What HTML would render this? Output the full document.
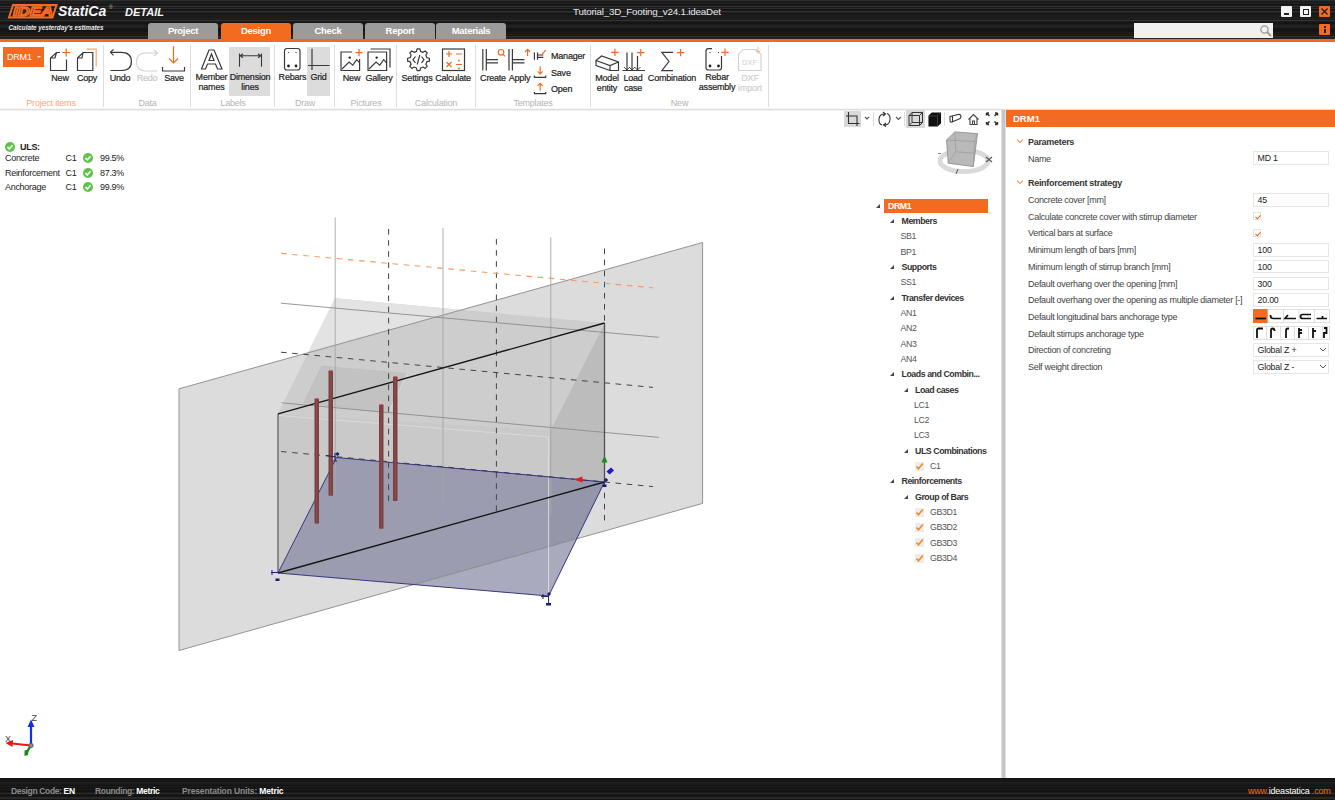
<!DOCTYPE html>
<html><head><meta charset="utf-8">
<style>
*{margin:0;padding:0;box-sizing:border-box}
html,body{width:1335px;height:800px;overflow:hidden;background:#fff;font-family:"Liberation Sans",sans-serif;position:relative}
.a{position:absolute}
#title{left:0;top:0;width:1335px;height:39px;background:linear-gradient(180deg,rgb(44,44,44) 0px,rgb(44,44,44) 1px,rgb(30,30,30) 1px,rgb(30,30,30) 2px,rgb(28,28,28) 2px,rgb(28,28,28) 3px,rgb(32,32,32) 3px,rgb(32,32,32) 4px,rgb(22,22,22) 4px,rgb(22,22,22) 5px,rgb(26,26,26) 5px,rgb(26,26,26) 6px,rgb(50,50,50) 6px,rgb(50,50,50) 7px,rgb(26,26,26) 7px,rgb(26,26,26) 8px,rgb(44,44,44) 8px,rgb(44,44,44) 9px,rgb(20,20,20) 9px,rgb(20,20,20) 10px,rgb(22,22,22) 10px,rgb(22,22,22) 11px,rgb(50,50,50) 11px,rgb(50,50,50) 12px,rgb(34,34,34) 12px,rgb(34,34,34) 13px,rgb(22,22,22) 13px,rgb(22,22,22) 14px,rgb(26,26,26) 14px,rgb(26,26,26) 15px,rgb(28,28,28) 15px,rgb(28,28,28) 16px,rgb(28,28,28) 16px,rgb(28,28,28) 17px,rgb(26,26,26) 17px,rgb(26,26,26) 18px,rgb(34,34,34) 18px,rgb(34,34,34) 19px,rgb(26,26,26) 19px,rgb(26,26,26) 20px,rgb(50,50,50) 20px,rgb(50,50,50) 21px,rgb(28,28,28) 21px,rgb(28,28,28) 22px,rgb(22,22,22) 22px,rgb(22,22,22) 23px,rgb(20,20,20) 23px,rgb(20,20,20) 24px,rgb(26,26,26) 24px,rgb(26,26,26) 25px,rgb(34,34,34) 25px,rgb(34,34,34) 26px,rgb(32,32,32) 26px,rgb(32,32,32) 27px,rgb(32,32,32) 27px,rgb(32,32,32) 28px,rgb(20,20,20) 28px,rgb(20,20,20) 29px,rgb(22,22,22) 29px,rgb(22,22,22) 30px,rgb(20,20,20) 30px,rgb(20,20,20) 31px,rgb(20,20,20) 31px,rgb(20,20,20) 32px,rgb(28,28,28) 32px,rgb(28,28,28) 33px,rgb(22,22,22) 33px,rgb(22,22,22) 34px,rgb(34,34,34) 34px,rgb(34,34,34) 35px,rgb(22,22,22) 35px,rgb(22,22,22) 36px,rgb(50,50,50) 36px,rgb(50,50,50) 37px,rgb(30,30,30) 37px,rgb(30,30,30) 38px,rgb(38,38,38) 38px,rgb(38,38,38) 39px)}
#oline{left:0;top:39px;width:1335px;height:3px;background:#f26b21}
.tab{top:23px;height:16px;width:70px;background:#9b9b9b;border-radius:3px 3px 0 0;color:#fff;font-weight:bold;font-size:9.5px;letter-spacing:-0.3px;text-align:center;line-height:16px}
.tab.on{background:#f26b21}
#ribbon{left:0;top:42px;width:1335px;height:67px;background:#fff}
#rbline{left:0;top:108px;width:1335px;height:3px;background:linear-gradient(180deg,#f7f7f7 0px,#f7f7f7 1px,#dedede 1px,#dedede 2px,#f1f1f1 2px,#f1f1f1 3px)}
.rt{font-size:9px;letter-spacing:-0.2px;-webkit-text-stroke:0.2px;color:#222;text-align:center;line-height:10px;white-space:nowrap}
.gl{font-size:9px;letter-spacing:-0.2px;color:#b4b4b4;top:97.6px;white-space:nowrap}
.sep{top:45px;width:1px;height:62px;background:#dcdcdc}
#status{left:0;top:778px;width:1335px;height:22px;background:linear-gradient(180deg,rgb(18,18,18) 0px,rgb(18,18,18) 1px,rgb(24,24,24) 1px,rgb(24,24,24) 2px,rgb(26,26,26) 2px,rgb(26,26,26) 3px,rgb(20,20,20) 3px,rgb(20,20,20) 4px,rgb(34,34,34) 4px,rgb(34,34,34) 5px,rgb(26,26,26) 5px,rgb(26,26,26) 6px,rgb(24,24,24) 6px,rgb(24,24,24) 7px,rgb(20,20,20) 7px,rgb(20,20,20) 8px,rgb(28,28,28) 8px,rgb(28,28,28) 9px,rgb(22,22,22) 9px,rgb(22,22,22) 10px,rgb(20,20,20) 10px,rgb(20,20,20) 11px,rgb(26,26,26) 11px,rgb(26,26,26) 12px,rgb(20,20,20) 12px,rgb(20,20,20) 13px,rgb(16,16,16) 13px,rgb(16,16,16) 14px,rgb(28,28,28) 14px,rgb(28,28,28) 15px,rgb(40,40,40) 15px,rgb(40,40,40) 16px,rgb(26,26,26) 16px,rgb(26,26,26) 17px,rgb(18,18,18) 17px,rgb(18,18,18) 18px,rgb(22,22,22) 18px,rgb(22,22,22) 19px,rgb(40,40,40) 19px,rgb(40,40,40) 20px,rgb(40,40,40) 20px,rgb(40,40,40) 21px,rgb(22,22,22) 21px,rgb(22,22,22) 22px)}
.st{top:786px;font-size:8.5px;letter-spacing:-0.35px;color:#8a8a8a;font-weight:bold;white-space:nowrap}
.st b{color:#fff}
#split{left:1001px;top:110px;width:5px;height:668px;background:#e2e2e2}
#split2{left:1002px;top:110px;width:3px;height:668px;background:#c6c6c6}
#phead{left:1006px;top:110px;width:329px;height:17px;background:#f26b21;color:#fff;font-weight:bold;font-size:9.5px;line-height:17px;padding-left:7px}
.pl{left:1028px;font-size:9px;letter-spacing:-0.3px;color:#444;white-space:nowrap;margin-top:1px}
.ph{left:1028px;font-size:9px;letter-spacing:-0.3px;color:#333;font-weight:bold;white-space:nowrap;margin-top:0.5px}
.chev{left:1017px;width:6px;height:6px}
.inp{left:1253px;width:76px;height:13.5px;border:1px solid #e6e6e6;background:#fff;font-size:8.8px;letter-spacing:-0.2px;color:#222;padding-left:3.5px;line-height:12px}
.cb{left:1253px;width:8px;height:8px;border:1px solid #e3e3e3;background:#fff}
.tr{font-size:8.8px;letter-spacing:-0.35px;color:#555;white-space:nowrap;margin-top:0.6px}
.tr.b{font-weight:bold;color:#333;letter-spacing:-0.45px}
.tri{width:0;height:0;border-left:4px solid transparent;border-bottom:4px solid #444;margin-top:-1px}
.res{font-size:9px;letter-spacing:-0.3px;color:#222;white-space:nowrap}
</style></head><body>
<div id="title" class="a"></div>
<div id="oline" class="a"></div>
<div class="a tab" style="left:148px">Project</div>
<div class="a tab on" style="left:221px">Design</div>
<div class="a tab" style="left:293px">Check</div>
<div class="a tab" style="left:365px">Report</div>
<div class="a tab" style="left:436px">Materials</div>
<div class="a" style="left:573px;top:6px;font-size:9.8px;letter-spacing:-0.2px;color:#e8e8e8;white-space:nowrap">Tutorial_3D_Footing_v24.1.ideaDet</div>

<div id="ribbon" class="a"></div>
<div id="rbline" class="a"></div>

<!-- logo -->
<svg class="a" style="left:0;top:0" width="170" height="38" viewBox="0 0 170 38">
 <polygon points="13,5 56.5,5 52.5,17.5 9,17.5" fill="none" stroke="#f26b21" stroke-width="2"/>
 <text x="13" y="15.8" font-family="Liberation Sans" font-weight="bold" font-style="italic" font-size="12.5" fill="#000" stroke="#f26b21" stroke-width="1.4" textLength="40" lengthAdjust="spacingAndGlyphs">IDEA</text>
 <text x="58" y="16" font-family="Liberation Sans" font-weight="bold" font-style="italic" font-size="14" fill="#f4f4f4">StatiCa</text>
 <text x="109" y="9" font-family="Liberation Sans" font-size="5" fill="#bbb">®</text>
 <text x="125" y="15.5" font-family="Liberation Sans" font-weight="bold" font-style="italic" font-size="11" fill="#f4f4f4">DETAIL</text>
 <text x="8.5" y="29.5" font-family="Liberation Sans" font-style="italic" font-weight="bold" font-size="7" fill="#e8e8e8" textLength="95" lengthAdjust="spacingAndGlyphs">Calculate yesterday's estimates</text>
</svg>
<!-- window buttons -->
<div class="a" style="left:1281px;top:6px;width:11px;height:11px;background:#f2f2f2;border-radius:1px"><div class="a" style="left:3px;top:7px;width:5px;height:1.5px;background:#222"></div></div>
<div class="a" style="left:1300px;top:6px;width:11px;height:11px;background:#f2f2f2;border-radius:1px"><div class="a" style="left:2.5px;top:2.5px;width:6px;height:6px;border:1.3px solid #222"></div></div>
<div class="a" style="left:1319px;top:6px;width:11px;height:11px;background:#f26b21;border-radius:1px"><svg class="a" style="left:0;top:0" width="11" height="11"><path d="M2.5 2.5L8.5 8.5M8.5 2.5L2.5 8.5" stroke="#222" stroke-width="1.4"/></svg></div>
<div class="a" style="left:1319px;top:24px;width:11px;height:11px;background:#f26b21;border-radius:1px"><div class="a" style="left:5px;top:2px;width:1.5px;height:1.5px;background:#222"></div><div class="a" style="left:5px;top:4.5px;width:1.5px;height:4.5px;background:#222"></div></div>
<div class="a" style="left:1134px;top:23px;width:139px;height:15px;background:#f0f0f0"></div>
<svg class="a" style="left:1259px;top:24px" width="14" height="13"><circle cx="5.5" cy="5.5" r="3.6" fill="none" stroke="#999" stroke-width="1.3"/><path d="M8 8L12 12" stroke="#999" stroke-width="1.8"/></svg>

<!-- ribbon content -->
<div class="a" style="left:3px;top:47px;width:41px;height:20px;background:#f26b21"></div>
<div class="a" style="left:7px;top:52px;font-size:9px;color:#fff;letter-spacing:-0.2px">DRM1</div>
<div class="a" style="left:37px;top:56px;width:0;height:0;border-left:2.5px solid transparent;border-right:2.5px solid transparent;border-top:2.5px solid #fff"></div>

<div class="a" style="left:229px;top:47px;width:41px;height:49px;background:#dcdcdc"></div>
<div class="a" style="left:307px;top:47px;width:23px;height:49px;background:#dcdcdc"></div>

<svg class="a" style="left:0;top:42px" width="780" height="66" viewBox="0 42 780 66" fill="none" stroke-linecap="butt">
 <g stroke="#3a3a3a" stroke-width="1.2">
  <!-- New doc -->
  <path d="M60 52.5 L56.5 52.5 L50.5 58 L50.5 70.5 L66.5 70.5 L66.5 59.5 M50.5 58 L55 58 L56.5 52.5"/>
  <!-- Copy doc -->
  <path d="M83 52.5 L92.8 52.5 L92.8 70.5 L77.5 70.5 L77.5 58 Z M77.5 58 L82 58 L83 52.5"/>
  <!-- Undo -->
  <path d="M110.5 52.3 L121 52.3 Q131.4 52.3 131.4 61.4 Q131.4 70.5 121 70.5 L110.5 70.5"/>
  <path d="M113.5 49.3 L110.5 52.3 L113.5 55.3"/>
  <!-- Save tray -->
  <path d="M162.5 67 L162.5 71 L184.5 71 L184.5 67"/>
  <!-- Member names A -->
  <path d="M201.5 69 L209 50 L214 50 L222 69 L217.5 69 L215.5 64 L207.5 64 L205.5 69 Z M209 60.5 L214 60.5 L211.5 54 Z"/>
  <!-- Dimension lines -->
  <path d="M239.5 53.4 L239.5 66.7 M261.5 53.4 L261.5 66.7 M240 55.8 L261 55.8 M243 53.8 L240.2 55.8 L243 57.8 M258 53.8 L260.8 55.8 L258 57.8" stroke-width="1.1"/>
  <!-- Rebars -->
  <rect x="284.5" y="48.5" width="15.5" height="21.5" rx="2.5"/>
  <!-- Grid -->
  <path d="M312 48.7 L312 70 M308 65.5 L329.5 65.5"/>
  <!-- Pictures New -->
  <path d="M352 52 L341 52 L341 70.5 L359.6 70.5 L359.6 59"/>
  <path d="M342 69 L349 62 L352.8 65.2 L356.7 59.7 L359.6 62.8"/>
  <!-- Gallery -->
  <path d="M368 52 L386.6 52 L386.6 70.5 L368 70.5 Z M370.5 49 L390 49 L390 67.5"/>
  <path d="M369 69 L376 62 L379.8 65.2 L383.7 59.7 L386.6 62.8"/>
  <!-- Settings gear -->
  <path d="M426.86 57.69 L429.40 58.24 L429.40 61.16 L426.86 61.71 L425.83 64.19 L427.24 66.37 L425.17 68.44 L422.99 67.03 L420.51 68.06 L419.96 70.60 L417.04 70.60 L416.49 68.06 L414.01 67.03 L411.83 68.44 L409.76 66.37 L411.17 64.19 L410.14 61.71 L407.60 61.16 L407.60 58.24 L410.14 57.69 L411.17 55.21 L409.76 53.03 L411.83 50.96 L414.01 52.37 L416.49 51.34 L417.04 48.80 L419.96 48.80 L420.51 51.34 L422.99 52.37 L425.17 50.96 L427.24 53.03 L425.83 55.21 Z" stroke-linejoin="round"/>
  <path d="M415.5 56.5 L413 59.7 L415.5 63 M421.5 56.5 L424 59.7 L421.5 63 M419.8 55 L417.2 64.5"/>
  <!-- Calculate -->
  <rect x="442.5" y="49" width="22" height="21.5"/>
  <!-- Create -->
  <path d="M482.8 49 L482.8 70.5 M486.3 49 L486.3 70.5 M486.3 59.7 L498 59.7 M486.3 62.8 L498 62.8"/>
  <!-- Apply -->
  <path d="M509 49 L509 70.5 M512.4 49 L512.4 70.5 M512.4 59.7 L524.5 59.7 M512.4 62.8 L524.5 62.8"/>
  <!-- Manager small -->
  <path d="M534.4 52.6 L534.4 59.7 M537.5 52.6 L537.5 59.7 M537.5 55 L543.4 55 M537.5 57.3 L543.4 57.3"/>
  <path d="M534.4 75.4 L534.4 77.3 L545.7 77.3 L545.7 75.4"/>
  <path d="M534.4 92 L534.4 93.6 L545.7 93.6 L545.7 92"/>
  <!-- Model entity box -->
  <path d="M596 60.5 L601.5 56 L618.5 62 L618.5 70.5 L610 70.5 L596 65.5 Z M596 60.5 L610 65.5 L618.5 62 M610 65.5 L610 70.5"/>
  <!-- Load case -->
  <path d="M627 52.6 L627 70 M632 52.6 L632 70 M637.5 56 L637.5 70 M622.5 70.5 L645 70.5"/>
  <path d="M624 67 L627 70 L630 67 M629 67 L632 70 L635 67 M634.5 67 L637.5 70 L640.5 67" stroke-width="0.9"/>
  <!-- Combination sigma -->
  <path d="M673 52.3 L661.8 52.3 L669 61.5 L661.8 70.7 L673 70.7"/>
  <!-- Rebar assembly -->
  <path d="M712 48.7 L708.5 48.7 Q706 48.7 706 51.2 L706 67.5 Q706 70 708.5 70 L719 70 Q721.5 70 721.5 67.5 L721.5 56"/>
 </g>
 <!-- dots rebars -->
 <g fill="#222">
  <circle cx="288.5" cy="66" r="1.4"/><circle cx="296" cy="66" r="1.4"/>
  <circle cx="288.5" cy="52.5" r="0.6"/><circle cx="296" cy="52.5" r="0.6"/>
  <circle cx="349.7" cy="57.6" r="1.2"/><circle cx="376.7" cy="57.6" r="1.2"/>
  <circle cx="710" cy="66" r="1.4"/><circle cx="718.5" cy="66" r="1.4"/>
  <circle cx="710" cy="52.5" r="0.6"/><circle cx="718.5" cy="52.5" r="0.6"/>
 </g>
 <!-- light gray redo & dxf -->
 <g stroke="#d0d0d0" stroke-width="1.1">
  <path d="M157 53 L146 53 Q136.5 53 136.5 62 Q136.5 71 146 71 L157 71"/>
  <path d="M154 50 L157.5 53 L154 56"/>
  <path d="M743 49.5 L756 49.5 L761 54.5 L761 70.5 L738.5 70.5 L738.5 54.5 Z"/>
 </g>
 <text x="742" y="65" font-family="Liberation Sans" font-size="7.5" fill="#cfcfcf">DXF</text>
 <g stroke="#f6b48e" stroke-width="1"><path d="M758 47 L758 53 M755.5 50.5 L758 53 L760.5 50.5"/></g>
 <!-- orange accents -->
 <g stroke="#f26b21" stroke-width="1.2">
  <path d="M66.2 48.5 L66.2 56.5 M62.2 52.5 L70.2 52.5"/>
  <path d="M86.4 49.1 L96.2 49.1 L96.2 66.6" stroke="#f8a77c"/>
  <path d="M173.5 46 L173.5 63 M169 58.5 L173.5 63 L178 58.5"/>
  <path d="M359 49 L359 56.2 M355.4 52.6 L362.6 52.6"/>
  <path d="M446 54 L452 54 M449 51 L449 57 M456 54 L462 54 M446.5 62 L451.5 67 M451.5 62 L446.5 67 M456 64.5 L462 64.5"/>
  <circle cx="459" cy="60.5" r="0.4"/><circle cx="459" cy="68.5" r="0.4"/>
  <circle cx="501" cy="52.3" r="2.8"/><path d="M503 54.3 L505 56.3"/>
  <path d="M527.6 49.4 L527.6 56 M525 52 L527.6 49.4 L530.2 52"/>
  <path d="M545.7 50.2 L541 55.7"/>
  <path d="M540.2 66.5 L540.2 73.8 M537.7 71.3 L540.2 73.8 L542.7 71.3"/>
  <path d="M540.2 83.3 L540.2 90.5 M537.7 85.8 L540.2 83.3 L542.7 85.8"/>
  <path d="M614.9 48.7 L614.9 56 M611.2 52.3 L618.6 52.3"/>
  <path d="M640.8 48.9 L640.8 56.3 M637.1 52.6 L644.5 52.6"/>
  <path d="M680.6 48.9 L680.6 56.3 M676.9 52.6 L684.3 52.6"/>
  <path d="M725 48.6 L725 56 M721.3 52.3 L728.7 52.3"/>
 </g>
 <!-- separators -->
 <g stroke="#dedede" stroke-width="1"><path d="M103.5 45 V107 M190.5 45 V107 M274.5 45 V107 M334.5 45 V107 M396.5 45 V107 M475.5 45 V107 M590.5 45 V107 M768.5 45 V107"/></g>
</svg>
<div class="a" style="left:441px;top:42px"></div>
<div class="a rt" style="left:30px;top:73px;width:60px;color:#222">New</div>
<div class="a rt" style="left:57px;top:73px;width:60px;color:#222">Copy</div>
<div class="a rt" style="left:90px;top:73px;width:60px;color:#222">Undo</div>
<div class="a rt" style="left:117px;top:73px;width:60px;color:#c8c8c8">Redo</div>
<div class="a rt" style="left:144px;top:73px;width:60px;color:#222">Save</div>
<div class="a rt" style="left:181.5px;top:72px;width:60px;color:#222">Member</div>
<div class="a rt" style="left:181.5px;top:82px;width:60px;color:#222">names</div>
<div class="a rt" style="left:220px;top:72px;width:60px;color:#222">Dimension</div>
<div class="a rt" style="left:220px;top:82px;width:60px;color:#222">lines</div>
<div class="a rt" style="left:262.5px;top:72px;width:60px;color:#222">Rebars</div>
<div class="a rt" style="left:288.5px;top:72px;width:60px;color:#222">Grid</div>
<div class="a rt" style="left:321.5px;top:73px;width:60px;color:#222">New</div>
<div class="a rt" style="left:349px;top:73px;width:60px;color:#222">Gallery</div>
<div class="a rt" style="left:387px;top:73px;width:60px;color:#222">Settings</div>
<div class="a rt" style="left:423px;top:73px;width:60px;color:#222">Calculate</div>
<div class="a rt" style="left:463px;top:73px;width:60px;color:#222">Create</div>
<div class="a rt" style="left:489.5px;top:73px;width:60px;color:#222">Apply</div>
<div class="a rt" style="left:577px;top:73px;width:60px;color:#222">Model</div>
<div class="a rt" style="left:577px;top:83px;width:60px;color:#222">entity</div>
<div class="a rt" style="left:603px;top:73px;width:60px;color:#222">Load</div>
<div class="a rt" style="left:603px;top:83px;width:60px;color:#222">case</div>
<div class="a rt" style="left:642px;top:73px;width:60px;color:#222">Combination</div>
<div class="a rt" style="left:687px;top:72px;width:60px;color:#222">Rebar</div>
<div class="a rt" style="left:687px;top:82px;width:60px;color:#222">assembly</div>
<div class="a rt" style="left:720px;top:73px;width:60px;color:#d0d0d0">DXF</div>
<div class="a rt" style="left:720px;top:83px;width:60px;color:#d0d0d0">import</div>
<div class="a rt" style="left:551px;top:51px;text-align:left">Manager</div>
<div class="a rt" style="left:551px;top:68px;text-align:left">Save</div>
<div class="a rt" style="left:551px;top:84px;text-align:left">Open</div>
<div class="a gl" style="left:11px;width:80px;text-align:center;color:#f7a57a">Project items</div>
<div class="a gl" style="left:107.5px;width:80px;text-align:center;color:#b4b4b4">Data</div>
<div class="a gl" style="left:193px;width:80px;text-align:center;color:#b4b4b4">Labels</div>
<div class="a gl" style="left:265px;width:80px;text-align:center;color:#b4b4b4">Draw</div>
<div class="a gl" style="left:326px;width:80px;text-align:center;color:#b4b4b4">Pictures</div>
<div class="a gl" style="left:396px;width:80px;text-align:center;color:#b4b4b4">Calculation</div>
<div class="a gl" style="left:493px;width:80px;text-align:center;color:#b4b4b4">Templates</div>
<div class="a gl" style="left:639.5px;width:80px;text-align:center;color:#b4b4b4">New</div>


<div id="status" class="a"></div>
<div class="a st" style="left:11px">Design Code: <b>EN</b></div>
<div class="a st" style="left:95px">Rounding: <b>Metric</b></div>
<div class="a st" style="left:182px;letter-spacing:-0.15px">Presentation Units: <b>Metric</b></div>
<div class="a" style="left:1248px;top:786px;font-size:9px;letter-spacing:-0.2px;color:#f26b21;white-space:nowrap">www.<span style="color:#fff">ideastatica</span> .com</div>

<svg class="a" style="left:0;top:110px" width="1001" height="668" viewBox="0 110 1001 668">
 <polygon points="179,388.8 702.6,242.5 702.6,503.4 179,650.5" fill="#dcdcdc"/>
 <polygon points="335,298.3 604.5,323 604.5,482 548.6,596 278,573 278,413.8" fill="#cdcdcd"/>
 <polygon points="335,298.3 461.4,309.9 308.15,352.7" fill="#e3e3e3"/>
 <polygon points="278,413.8 550,430.5 548.6,596 278,573" fill="#c9c9c9"/>
 <polygon points="550,430.5 604.5,323 604.5,482 548.6,596" fill="#bcbcbc"/>
 <polygon points="413.8,584.5 548.6,596 576.66,538.8" fill="#e6e6e6"/>
 <polygon points="321.7,366.2 407.2,373.7 388.5,413 304.2,402.5" fill="#c2c2c2" stroke="#bcbcbc" stroke-width="0.8"/>
 <path d="M407.2 373.7 L388.5 413" stroke="#e6e6e6" stroke-width="0.8"/>
 <polygon points="278,573 336.5,457.5 604.5,482 548.6,596" fill="rgb(118,118,156)" fill-opacity="0.54"/>
 <!-- plane bottom edge over purple -->
 <polygon points="179,388.8 702.6,242.5 702.6,503.4 179,650.5" fill="none" stroke="#8a8a8a" stroke-width="0.9"/>
 <!-- light edges -->
 <path d="M279 415.5 L548.6 437" stroke="#dadada" stroke-width="0.9"/>
 <path d="M548.6 437 L548.6 600" stroke="#e0e0e0" stroke-width="0.9"/>
 <path d="M604.5 323 L550 430.5" stroke="#d0d0d0" stroke-width="0.6"/>
 <!-- grid lines -->
 <g fill="none" stroke-width="0.9">
  <path d="M335.2 217.5V496.5 M443 228V507 M550.8 237.5V516" stroke="#a6a6a6"/>
  <path d="M388.6 229V501 M496.4 239V511.5 M604.5 248.5V522" stroke="#444" stroke-dasharray="5.6 5.5" stroke-width="1"/>
  <path d="M281 253.4 L653 287.8" stroke="#f59a64" stroke-dasharray="5.6 5.6" stroke-width="1.1"/>
  <path d="M281 303.2 L658.6 337.3 M281.5 402.8 L659 437.4" stroke="#8c8c8c"/>
  <path d="M281 352.2 L653 387.4 M281 451.5 L653 486.6" stroke="#444" stroke-dasharray="5.6 5.6" stroke-width="1"/>
 </g>
 <!-- box edges -->
 <path d="M278 413.8V573" stroke="#5a5a5a" stroke-width="1.2"/><path d="M604.5 323V482" stroke="#505050" stroke-width="1.3"/>
 <path d="M278 413.8 L604.5 323 M278 573 L604.5 482" stroke="#151515" stroke-width="1.3"/>
 <!-- purple edges -->
 <path d="M278 573 L336.5 457.5 M604.5 482 L548.6 596" stroke="#2a2a78" stroke-width="0.9" fill="none"/>
 <path d="M336.5 457.5 L604.5 482 M278 573 L548.6 596" stroke="#2a2a78" stroke-width="0.9" fill="none"/>
 <!-- rebars -->
 <g>
  <rect x="314.5" y="399" width="4.5" height="124.5" fill="#7b4141"/><rect x="316" y="399" width="1.4" height="124.5" fill="#8a4a4a"/>
  <rect x="328.5" y="371" width="4.5" height="124.6" fill="#7b4141"/><rect x="330" y="371" width="1.4" height="124.6" fill="#8a4a4a"/>
  <rect x="379" y="405" width="4.5" height="123.6" fill="#7b4141"/><rect x="380.5" y="405" width="1.4" height="123.6" fill="#8a4a4a"/>
  <rect x="393" y="377" width="4.5" height="124" fill="#7b4141"/><rect x="394.5" y="377" width="1.4" height="124" fill="#8a4a4a"/>
  <ellipse cx="316.75" cy="399.3" rx="2.3" ry="1" fill="#b03535"/><ellipse cx="330.75" cy="371.3" rx="2.3" ry="1" fill="#b03535"/>
  <ellipse cx="381.25" cy="405.3" rx="2.3" ry="1" fill="#b03535"/><ellipse cx="395.25" cy="377.3" rx="2.3" ry="1" fill="#b03535"/>
 </g>
 <!-- support marks -->
 <g stroke="#1e1e6e" stroke-width="1" fill="#1e1e6e">
  <path d="M271 572.5H278 M272 570V575" fill="none"/><rect x="276" y="579" width="3" height="1.5"/>
  <path d="M326 455.5L336 457 M335 453V460 M333 461H337" fill="none"/><circle cx="337.5" cy="454" r="1.3"/>
  <path d="M541 596.5H548.6 M543 594V599 M548.6 596V604" fill="none"/><rect x="546.5" y="603.5" width="4" height="1.5"/><circle cx="549" cy="594" r="1.2"/>
  <rect x="603" y="485" width="3" height="1.5"/><circle cx="606" cy="480" r="1.3"/>
 </g>
 <path d="M604.5 455.5 L601.5 462.5 L607.5 462.5 Z" fill="#1d8a1d"/>
 <path d="M606.5 471.5 L611 467.5 L614 470.5 L609.5 474.5 Z" fill="#1a1ad0"/>
 <path d="M573.5 479.5 L582.5 476.5 L582.5 482.5 Z" fill="#e02020"/>
</svg>

<div class="a" style="left:844px;top:111px;width:17px;height:16px;background:#d9d9d9"></div>
<div class="a" style="left:906px;top:110px;width:19px;height:18px;background:#d9d9d9"></div>
<svg class="a" style="left:840px;top:108px" width="160" height="22" viewBox="840 108 160 22" fill="none" stroke="#333" stroke-width="1.1">
 <path d="M848.5 112V123.5H859.5 M846 116H857V126"/>
 <path d="M865 117L867 119L869 117" stroke="#555"/>
 <path d="M873.5 112V126" stroke="#ddd"/>
 <path d="M885 114Q879.5 113.5 879 119Q878.5 124 882 125 M883 112L885.5 114L883 116 M883.5 125Q889.5 125.5 890 119.5Q890.5 115 887 113.5 M886 126.5L883.5 125L886 123"/>
 <path d="M896 117L898.5 119.5L901 117" stroke="#555"/>
 <path d="M904.5 112V126" stroke="#ddd"/>
 <path d="M909 115.5L912 112.5H922.5V122.5L919.5 125.5H909Z M909 115.5H919.5V125.5 M919.5 115.5L922.5 112.5 M912 112.5V122.5H922.5 M912 122.5L909 125.5" stroke-width="1"/>
 <path d="M929 116L932 113H940.5V123L937.5 126H929Z" fill="#111" stroke="#111"/>
 <path d="M929 116H937.5V126 M937.5 116L940.5 113" stroke="#555" stroke-width="0.6"/>
 <path d="M944.5 112V126" stroke="#ddd"/>
 <path d="M950 116.5L958 114.5Q961 114 961 116.5Q961 118.5 959 119L952 122Q950 122.5 950 120Z M952.5 116V121.5" stroke="#333"/>
 <path d="M968.5 119.5L973.5 114.5L978.5 119.5 M970 118.5V124.5H977V118.5 M972.5 124.5V121H974.5V124.5" stroke="#444"/>
 <path d="M986.5 113L989.5 116 M986.5 113H989 M986.5 113V115.5 M997.5 113L994.5 116 M997.5 113H995 M997.5 113V115.5 M986.5 124.5L989.5 121.5 M986.5 124.5H989 M986.5 124.5V122 M997.5 124.5L994.5 121.5 M997.5 124.5H995 M997.5 124.5V122" stroke="#333" stroke-width="1.5"/>
</svg>
<svg class="a" style="left:925px;top:125px" width="75" height="55" viewBox="925 125 75 55">
 <ellipse cx="964" cy="161" rx="24" ry="10.5" fill="none" stroke="#dadada" stroke-width="5"/>
 <polygon points="954.8,131.9 977.5,133.6 973.3,166.6 948.2,163.2 946.5,140.1" fill="#b9b9b9" stroke="#8a8a8a" stroke-width="0.8"/>
 <path d="M946.5 140.1L974.7 141.5L977.5 133.6 M974.7 141.5L973.3 166.6 M954.8 131.9L955.8 151.8L948.2 163.2 M955.8 151.8L975.4 153.2" stroke="#999" stroke-width="0.7" fill="none"/>
 <path d="M986 157L992 162 M986 162L992 157" stroke="#555" stroke-width="1.1"/>
 <path d="M956 174L958 169" stroke="#555" stroke-width="1"/>
 <path d="M938 153.5H941" stroke="#777" stroke-width="0.9"/>
</svg>
<svg class="a" style="left:0;top:705px" width="50" height="55" viewBox="0 705 50 55">
 <path d="M31 745V726" stroke="#1030e8" stroke-width="2.2"/><path d="M27.5 727L31 719.5L34.5 727Z" fill="#1030e8"/>
 <path d="M31 745.5L12 743.5" stroke="#e81818" stroke-width="2.2"/><path d="M13 740L5.5 743L12.5 747Z" fill="#e81818"/>
 <path d="M31 745L27 752" stroke="#1a8a1a" stroke-width="2.4"/><path d="M24.5 750.5L28.5 749.5L28 755L24.5 756Z" fill="#1a8a1a"/>
 <circle cx="31" cy="745.5" r="2.2" fill="#888" stroke="#555" stroke-width="0.8"/>
 <text x="31.5" y="721" font-family="Liberation Sans" font-size="9" fill="#444">Z</text>
 <text x="5" y="741.5" font-family="Liberation Sans" font-size="9" fill="#444">X</text>
</svg>
<div id="split" class="a"></div>
<div id="split2" class="a"></div>
<div id="phead" class="a">DRM1</div>
<svg class="a" style="left:1016px;top:138px" width="8" height="6"><path d="M1 1.5L4 4.5L7 1.5" fill="none" stroke="#f4a070" stroke-width="1.1"/></svg>
<div class="a ph" style="top:136px">Parameters</div>
<div class="a pl" style="top:153px">Name</div>
<div class="a inp" style="top:151px">MD 1</div>
<svg class="a" style="left:1016px;top:179px" width="8" height="6"><path d="M1 1.5L4 4.5L7 1.5" fill="none" stroke="#f4a070" stroke-width="1.1"/></svg>
<div class="a ph" style="top:177px">Reinforcement strategy</div>
<div class="a pl" style="top:194.0px">Concrete cover [mm]</div>
<div class="a inp" style="top:193.0px">45</div>
<div class="a pl" style="top:210.7px">Calculate concrete cover with stirrup diameter</div>
<div class="a cb" style="top:212.2px"><svg class="a" style="left:0;top:0" width="8" height="8"><path d="M1.5 4L3.3 5.8L6.5 2.3" fill="none" stroke="#f26b21" stroke-width="1.1"/></svg></div>
<div class="a pl" style="top:227.4px">Vertical bars at surface</div>
<div class="a cb" style="top:228.9px"><svg class="a" style="left:0;top:0" width="8" height="8"><path d="M1.5 4L3.3 5.8L6.5 2.3" fill="none" stroke="#f26b21" stroke-width="1.1"/></svg></div>
<div class="a pl" style="top:244.1px">Minimum length of bars [mm]</div>
<div class="a inp" style="top:243.1px">100</div>
<div class="a pl" style="top:260.8px">Minimum length of stirrup branch [mm]</div>
<div class="a inp" style="top:259.8px">100</div>
<div class="a pl" style="top:277.5px">Default overhang over the opening [mm]</div>
<div class="a inp" style="top:276.5px">300</div>
<div class="a pl" style="top:294.2px">Default overhang over the opening as multiple diameter [-]</div>
<div class="a inp" style="top:293.2px">20.00</div>
<div class="a pl" style="top:310.9px">Default longitudinal bars anchorage type</div>
<div class="a" style="left:1253px;top:309.4px;width:77px;height:14px;border:1px solid #e0e0e0;background:#fff"></div>
<div class="a" style="left:1253px;top:309.4px;width:15px;height:14px;background:#f26b21"></div>
<svg class="a" style="left:1253px;top:309.4px" width="77" height="14" fill="none" stroke="#111" stroke-width="1.7"><path d="M30.5 0V14M46 0V14M61.5 0V14M15 0V14" stroke="#ddd" stroke-width="1"/><path d="M2.5 9.5H13"/><path d="M17.5 6Q17.5 9.5 20 9.5H28"/><path d="M35 6L32 9.5H43"/><path d="M58 5.5H49.5Q47.5 5.5 47.5 7.5Q47.5 9.5 49.5 9.5H58"/><path d="M63.5 9.5H74M69.5 7V9.5"/></svg>
<div class="a pl" style="top:327.6px">Default stirrups anchorage type</div>
<div class="a" style="left:1253px;top:326.1px;width:77px;height:14px;border:1px solid #e0e0e0;background:#fff"></div>
<svg class="a" style="left:1253px;top:326.1px" width="77" height="14" fill="none" stroke="#111" stroke-width="1.8"><path d="M13.5 0V14M27.5 0V14M41.5 0V14M55.5 0V14M69.5 0V14" stroke="#ddd" stroke-width="1"/><path d="M4 12V4Q4 2.5 5.5 2.5H10"/><path d="M18 12V4Q18 2.5 19.5 2.5Q21.5 2.5 21.5 5"/><path d="M33 12V4.5Q33 2.5 35 2.5H36"/><path d="M46 12V2M46 4H49M46 7H49"/><path d="M60 12V2M60 5H63"/><path d="M71 2H73.5V7H71V12"/></svg>
<div class="a pl" style="top:344.3px">Direction of concreting</div>
<div class="a inp" style="top:343.3px">Global Z +</div>
<svg class="a" style="left:1319px;top:347.3px" width="8" height="5"><path d="M1 1L4 4L7 1" fill="none" stroke="#555" stroke-width="1"/></svg>
<div class="a pl" style="top:361.0px">Self weight direction</div>
<div class="a inp" style="top:360.0px">Global Z -</div>
<svg class="a" style="left:1319px;top:364.0px" width="8" height="5"><path d="M1 1L4 4L7 1" fill="none" stroke="#555" stroke-width="1"/></svg>
<div class="a" style="left:884px;top:199.0px;width:104px;height:14px;background:#f26b21"></div>
<div class="a tr b" style="left:888px;top:200.0px;color:#fff">DRM1</div>
<div class="a tri" style="left:876px;top:204.5px"></div>
<div class="a tri" style="left:890.0px;top:219.8px"></div>
<div class="a tr b" style="left:901.5px;top:215.3px">Members</div>
<div class="a tr" style="left:900.5px;top:230.7px">SB1</div>
<div class="a tr" style="left:900.5px;top:246.0px">BP1</div>
<div class="a tri" style="left:890.0px;top:265.8px"></div>
<div class="a tr b" style="left:901.5px;top:261.3px">Supports</div>
<div class="a tr" style="left:900.5px;top:276.6px">SS1</div>
<div class="a tri" style="left:890.0px;top:296.5px"></div>
<div class="a tr b" style="left:901.5px;top:292.0px">Transfer devices</div>
<div class="a tr" style="left:900.5px;top:307.3px">AN1</div>
<div class="a tr" style="left:900.5px;top:322.6px">AN2</div>
<div class="a tr" style="left:900.5px;top:338.0px">AN3</div>
<div class="a tr" style="left:900.5px;top:353.3px">AN4</div>
<div class="a tri" style="left:890.0px;top:373.1px"></div>
<div class="a tr b" style="left:901.5px;top:368.6px">Loads and Combin...</div>
<div class="a tri" style="left:904.0px;top:388.5px"></div>
<div class="a tr b" style="left:915.0px;top:384.0px">Load cases</div>
<div class="a tr" style="left:914.0px;top:399.3px">LC1</div>
<div class="a tr" style="left:914.0px;top:414.6px">LC2</div>
<div class="a tr" style="left:914.0px;top:429.9px">LC3</div>
<div class="a tri" style="left:904.0px;top:449.8px"></div>
<div class="a tr b" style="left:915.0px;top:445.3px">ULS Combinations</div>
<div class="a" style="left:915.0px;top:461.6px;width:9px;height:9px;background:#ececec"></div>
<svg class="a" style="left:915.0px;top:461.6px" width="9" height="9"><path d="M1.5 4.5L3.5 6.8L7.8 1.5" fill="none" stroke="#f6861f" stroke-width="1.5"/></svg>
<div class="a tr" style="left:930.0px;top:460.6px">C1</div>
<div class="a tri" style="left:890.0px;top:480.4px"></div>
<div class="a tr b" style="left:901.5px;top:475.9px">Reinforcements</div>
<div class="a tri" style="left:904.0px;top:495.8px"></div>
<div class="a tr b" style="left:915.0px;top:491.3px">Group of Bars</div>
<div class="a" style="left:915.0px;top:507.6px;width:9px;height:9px;background:#ececec"></div>
<svg class="a" style="left:915.0px;top:507.6px" width="9" height="9"><path d="M1.5 4.5L3.5 6.8L7.8 1.5" fill="none" stroke="#f6861f" stroke-width="1.5"/></svg>
<div class="a tr" style="left:930.0px;top:506.6px">GB3D1</div>
<div class="a" style="left:915.0px;top:522.9px;width:9px;height:9px;background:#ececec"></div>
<svg class="a" style="left:915.0px;top:522.9px" width="9" height="9"><path d="M1.5 4.5L3.5 6.8L7.8 1.5" fill="none" stroke="#f6861f" stroke-width="1.5"/></svg>
<div class="a tr" style="left:930.0px;top:521.9px">GB3D2</div>
<div class="a" style="left:915.0px;top:538.3px;width:9px;height:9px;background:#ececec"></div>
<svg class="a" style="left:915.0px;top:538.3px" width="9" height="9"><path d="M1.5 4.5L3.5 6.8L7.8 1.5" fill="none" stroke="#f6861f" stroke-width="1.5"/></svg>
<div class="a tr" style="left:930.0px;top:537.3px">GB3D3</div>
<div class="a" style="left:915.0px;top:553.6px;width:9px;height:9px;background:#ececec"></div>
<svg class="a" style="left:915.0px;top:553.6px" width="9" height="9"><path d="M1.5 4.5L3.5 6.8L7.8 1.5" fill="none" stroke="#f6861f" stroke-width="1.5"/></svg>
<div class="a tr" style="left:930.0px;top:552.6px">GB3D4</div>
<svg class="a" style="left:5px;top:142px" width="10" height="10"><circle cx="5" cy="5" r="5" fill="#5ec34a"/><path d="M2.5 5.0L4.25 7.0L7.5 3.25" fill="none" stroke="#fff" stroke-width="1.6"/></svg>
<div class="a res" style="left:20px;top:142px;font-weight:bold">ULS:</div>
<div class="a res" style="left:5px;top:153.0px">Concrete</div><div class="a res" style="left:65.5px;top:153.0px">C1</div>
<svg class="a" style="left:83px;top:153px" width="10" height="10"><circle cx="5" cy="5" r="5" fill="#5ec34a"/><path d="M2.5 5.0L4.25 7.0L7.5 3.25" fill="none" stroke="#fff" stroke-width="1.6"/></svg>
<div class="a res" style="left:100px;top:153.0px">99.5%</div>
<div class="a res" style="left:5px;top:167.5px">Reinforcement</div><div class="a res" style="left:65.5px;top:167.5px">C1</div>
<svg class="a" style="left:83px;top:168px" width="10" height="10"><circle cx="5" cy="5" r="5" fill="#5ec34a"/><path d="M2.5 5.0L4.25 7.0L7.5 3.25" fill="none" stroke="#fff" stroke-width="1.6"/></svg>
<div class="a res" style="left:100px;top:167.5px">87.3%</div>
<div class="a res" style="left:5px;top:182.0px">Anchorage</div><div class="a res" style="left:65.5px;top:182.0px">C1</div>
<svg class="a" style="left:83px;top:182px" width="10" height="10"><circle cx="5" cy="5" r="5" fill="#5ec34a"/><path d="M2.5 5.0L4.25 7.0L7.5 3.25" fill="none" stroke="#fff" stroke-width="1.6"/></svg>
<div class="a res" style="left:100px;top:182.0px">99.9%</div>
</body></html>
